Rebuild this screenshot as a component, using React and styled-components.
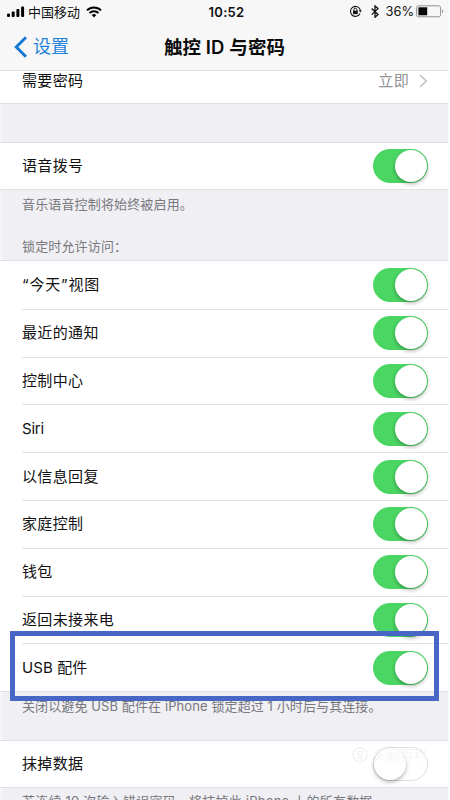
import React from "react";
import styled, { createGlobalStyle } from "styled-components";

const Global = createGlobalStyle`
  * { box-sizing: border-box; }
  body { margin: 0; background: #fff; overflow: hidden; }
`;
const Screen = styled.div`
  position: relative;
  width: 450px;
  height: 800px;
  overflow: hidden;
  background: #efeff4;
  color: #111;
  font-family: Inter, "Noto Sans CJK SC", sans-serif;
  border-right: 2px solid #fbfbfc;
`;
const Header = styled.header`
  height: 71px;
  background: #f7f7f8;
  border-bottom: 1px solid #dedee2;
`;
const StatusBar = styled.div`
  display: grid;
  grid-template-columns: 1fr auto 1fr;
  align-items: center;
  height: 23px;
  padding: 0 4px 0 7px;
`;
const StatusGroup = styled.div`
  display: flex;
  align-items: center;
  justify-content: ${(p) => (p.$end ? "flex-end" : "flex-start")};
`;
const Carrier = styled.span`
  font-size: 13px;
  line-height: 20px;
  margin: 0 6px 0 3px;
`;
const Clock = styled.span`
  font-size: 13px;
  font-weight: 600;
  line-height: 20px;
  letter-spacing: 0.3px;
  padding-left: 2px;
`;
const Percent = styled.span`
  font-size: 12.8px;
  line-height: 20px;
  margin: 0 2px 0 7px;
`;
const NavBar = styled.nav`
  display: grid;
  grid-template-columns: 1fr auto 1fr;
  align-items: center;
  height: 47px;
  padding: 0 13px 0 14px;
`;
const Back = styled.a`
  display: flex;
  align-items: center;
  gap: 6px;
  font-size: 18px;
  line-height: 26px;
  color: #1f82d8;
`;
const Title = styled.h1`
  margin: 0;
  font-size: 18.5px;
  letter-spacing: 0.1px;
  line-height: 26px;
  font-weight: 600;
  color: #0b0b0b;
`;
const Group = styled.section`
  background: #fff;
  border-bottom: 1px solid #dfdfe4;
  border-top: ${(p) => (p.$flush ? "0" : "1px solid #dfdfe4")};
`;
const Row = styled.div`
  display: flex;
  align-items: center;
  justify-content: space-between;
  height: ${(p) => p.$height || 47.8}px;
  margin-left: 22px;
  padding: 0 20px ${(p) => p.$lift || 0}px 0;
  & + & { border-top: 1px solid #e2e2e4; }
`;
const Label = styled.span`
  font-size: 15px;
  letter-spacing: ${(p) => p.$spacing ?? 0.35}px;
  line-height: 24px;
`;
const Value = styled.span`
  display: flex;
  align-items: center;
  gap: 10px;
  font-size: 15px;
  letter-spacing: 0.35px;
  line-height: 24px;
  color: #929297;
`;
const Spacer = styled.div`
  height: 38px;
  border-left: 2px solid #f5f5f8;
`;
const Note = styled.div`
  padding: ${(p) => p.$top}px 0 0 20px;
  height: ${(p) => p.$height}px;
  font-size: 13px;
  letter-spacing: ${(p) => p.$spacing ?? 0.05}px;
  line-height: 20px;
  white-space: nowrap;
  color: #78787d;
  border-left: 2px solid #f5f5f8;
`;
const Track = styled.span`
  display: flex;
  justify-content: ${(p) => (p.$on ? "flex-end" : "flex-start")};
  width: 55px;
  height: 34px;
  padding: 1px;
  border-radius: 17px;
  background: ${(p) => (p.$on ? "#4bd664" : "#fff")};
  box-shadow: ${(p) => (p.$on ? "none" : "inset 0 0 0 1px #e0e0e0")};
`;
const Knob = styled.span`
  width: 32px;
  height: 32px;
  border-radius: 50%;
  background: #fff;
  box-shadow: 0 2px 4px rgba(0, 0, 0, 0.3);
`;
const Highlight = styled.div`
  position: absolute;
  left: 10px;
  top: 631px;
  width: 429px;
  height: 70px;
  border: 5px solid #4866c5;
`;
const Watermark = styled.div`
  position: absolute;
  left: 352px;
  top: 745px;
  display: flex;
  align-items: center;
  gap: 4px;
  color: #f6f6f6;
  font-size: 14px;
  line-height: 20px;
  white-space: nowrap;
`;

const Switch = ({ on }) => <Track $on={on}><Knob /></Track>;

const Signal = () => (
  <svg width="18" height="12" viewBox="0 0 18 12">
    <rect x="0" y="7.5" width="3" height="3.5" rx="1" />
    <rect x="4.7" y="5.5" width="3" height="5.5" rx="1" />
    <rect x="9.4" y="3" width="3" height="8" rx="1" />
    <rect x="14.1" y="0.5" width="3" height="10.500" rx="1" />
  </svg>
);
const Wifi = () => (
  <svg width="16" height="12" viewBox="0 0 16 12" fill="none" stroke="#000" strokeWidth="2">
    <path d="M1 4.4a10 10 0 0 1 14 0M3.5 7a6.4 6.4 0 0 1 9 0" />
    <path d="M8 11.5L5.7 9.1a3.3 3.3 0 0 1 4.600 0z" fill="#000" stroke="none" />
  </svg>
);
const RotationLock = () => (
  <svg width="13" height="13" viewBox="0 0 13 13" fill="none" stroke="#111">
    <path d="M11 8.5a5 5 0 1 1 .4-3" strokeWidth="1.1" />
    <path d="M9.6 5.2h3.2l-1.5 2.2z" fill="#111" stroke="none" />
    <path d="M4.9 6V4.7a1.5 1.5 0 0 1 3 0V6" />
    <rect x="4" y="5.7" width="4.8" height="3.4" fill="#111" stroke="none" />
  </svg>
);
const Bluetooth = () => (
  <svg width="8" height="13" viewBox="0 0 8 13" fill="none" stroke="#111" strokeWidth="1.3">
    <path d="M.7 3.5l6.3 6-3 2.8V.9l3 2.7-6.3 6" />
  </svg>
);
const Battery = () => (
  <svg width="28" height="13" viewBox="0 0 28 13">
    <rect x=".6" y=".8" width="24" height="11" rx="2" fill="none" stroke="#919191" />
    <rect x="2.4" y="2.3" width="8.8" height="8" fill="#080808" />
    <path d="M26 4.5c1.7.4 1.7 3.2 0 3.6z" fill="#999" />
  </svg>
);

const accessItems = [
  { text: "“今天”视图", spacing: 0.8 },
  { text: "最近的通知" },
  { text: "控制中心" },
  { text: "Siri", spacing: -0.2 },
  { text: "以信息回复" },
  { text: "家庭控制" },
  { text: "钱包" },
  { text: "返回未接来电" },
  { text: "USB 配件", spacing: 0.1 },
];

export default function App() {
  return (
    <Screen>
      <Global />
      <Header>
        <StatusBar>
          <StatusGroup><Signal /><Carrier>中国移动</Carrier><Wifi /></StatusGroup>
          <Clock>10:52</Clock>
          <StatusGroup $end><RotationLock />&nbsp;&nbsp;<Bluetooth /><Percent>36%</Percent><Battery /></StatusGroup>
        </StatusBar>
        <NavBar>
          <Back>
            <svg width="13" height="22" viewBox="0 0 13 22" fill="none" stroke="#1778d4" strokeWidth="3"><path d="M12 1.2L2.3 11 12 20.8" /></svg>
            设置
          </Back>
          <Title>触控 ID 与密码</Title>
        </NavBar>
      </Header>
      <Group $flush>
        <Row $height={32} $lift={13}>
          <Label>需要密码</Label>
          <Value>立即<svg width="9" height="14" viewBox="0 0 9 14" fill="none" stroke="#c4c4c8" strokeWidth="1.7"><path d="M1 1l6.2 6L1 13" /></svg></Value>
        </Row>
      </Group>
      <Spacer />
      <Group><Row $height={46}><Label>语音拨号</Label><Switch on /></Row></Group>
      <Note $height={42} $top={4} $spacing={0.15}>音乐语音控制将始终被启用。</Note>
      <Note $height={28} $top={4} $spacing={0.15}>锁定时允许访问：</Note>
      <Group>
        {accessItems.map((item) => (
          <Row key={item.text}><Label $spacing={item.spacing}>{item.text}</Label><Switch on /></Row>
        ))}
      </Group>
      <Note $height={48} $top={4} $spacing={0.1}>关闭以避免 USB 配件在 iPhone 锁定超过 1 小时后与其连接。</Note>
      <Group><Row $height={46}><Label>抹掉数据</Label><Switch /></Row></Group>
      <Note $height={40} $top={3} $spacing={0.22}>若连续 10 次输入错误密码，将抹掉此 iPhone 上的所有数据。</Note>
      <Watermark>
        <svg width="16" height="16" viewBox="0 0 18 18" fill="none" stroke="#f1f1f1" strokeWidth="1.6"><circle cx="9" cy="9" r="8" /><path d="M12.5 6C10 4 6 5 6 7s6 2 6 4-4 3-6.500 1" /></svg>
        头闻百科
      </Watermark>
      <Highlight />
    </Screen>
  );
}
